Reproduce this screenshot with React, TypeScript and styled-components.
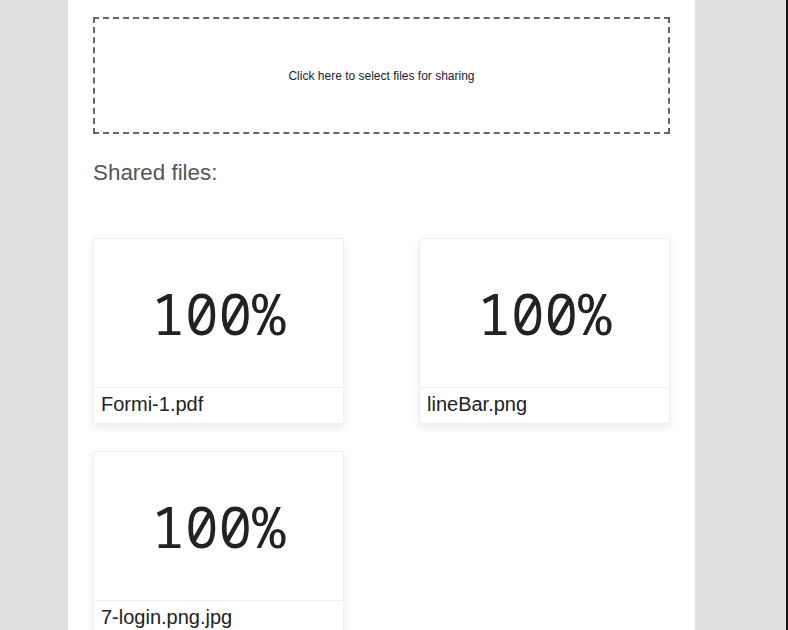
import React from "react";
import styled, { createGlobalStyle } from "styled-components";

const Global = createGlobalStyle`
  html, body { margin: 0; padding: 0; overflow: hidden; }
  body { font-family: "Liberation Sans", Arial, sans-serif; background: #e0e0e0; }
`;

const Frame = styled.div`
  width: 788px;
  height: 630px;
  box-sizing: border-box;
  background: #e0e0e0;
  border-right: 2px solid #151515;
  display: flex;
  align-items: flex-start;
  overflow: hidden;
`;

const Column = styled.main`
  margin-left: 68px;
  width: 627px;
  min-height: 630px;
  flex: none;
  background: #ffffff;
  box-sizing: border-box;
  padding: 17px 25px 0 25px;
  display: flex;
  flex-direction: column;
  & > * { flex-shrink: 0; }
`;

const DropZone = styled.div`
  height: 117px;
  box-sizing: border-box;
  border: 2px dashed #666666;
  display: flex;
  align-items: center;
  justify-content: center;
  font-size: 12px;
  color: #222233;
  cursor: pointer;
`;

const Heading = styled.h2`
  margin: 26px 0 0 0;
  font-weight: normal;
  font-size: 22.4px;
  color: #555555;
`;

const Grid = styled.div`
  margin-top: 52px;
  display: grid;
  grid-template-columns: 251px 251px;
  justify-content: space-between;
  row-gap: 27px;
`;

const Card = styled.div`
  background: #ffffff;
  border: 1px solid #f0f0f0;
  box-shadow: 0 4px 8px rgba(0, 0, 0, 0.08);
  display: flex;
  flex-direction: column;
`;

const Preview = styled.div`
  height: 148px;
  display: flex;
  align-items: center;
  justify-content: center;
  font-family: "Noto Sans Mono", "DejaVu Sans Mono", monospace;
  font-size: 56px;
  color: #222222;
  border-bottom: 1px solid #f0f0f0;
`;

const Caption = styled.div`
  padding: 5px 8px 7px 7px;
  font-size: 20px;
  line-height: 23px;
  color: #222222;
`;

const files = ["Formi-1.pdf", "lineBar.png", "7-login.png.jpg"];

export default function App() {
  return (
    <>
      <Global />
      <Frame>
        <Column>
          <DropZone>Click here to select files for sharing</DropZone>
          <Heading>Shared files:</Heading>
          <Grid>
            {files.map((f) => (
              <Card key={f}>
                <Preview>100%</Preview>
                <Caption>{f}</Caption>
              </Card>
            ))}
          </Grid>
        </Column>
      </Frame>
    </>
  );
}
